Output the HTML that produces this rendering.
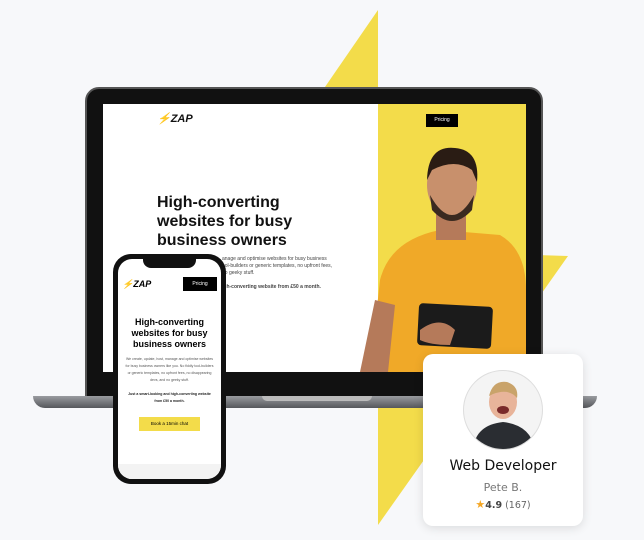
<!DOCTYPE html>
<html><head><meta charset="utf-8"><style>
*{margin:0;padding:0;box-sizing:border-box}
body{width:644px;height:540px;background:#f7f8fa;position:relative;overflow:hidden;font-family:"Liberation Sans",sans-serif}
.abs{position:absolute}
</style></head><body>
<svg class="abs" style="left:0;top:0" width="644" height="540">
<polygon points="378,10 378,100 316,100" fill="#f3dc4a"/>
<polygon points="378,250 568,256 378,525" fill="#f3dc4a"/>
</svg>
<!-- laptop -->
<div class="abs" style="left:85px;top:87px;width:458px;height:312px;background:#111;border-radius:14px 14px 0 0;border:2px solid #555"></div>
<div class="abs" style="left:103px;top:104px;width:423px;height:268px;background:#fff"></div>
<div class="abs" style="left:378px;top:104px;width:148px;height:268px;background:#f3dc4a"></div>
<div class="abs" style="left:33px;top:396px;width:564px;height:12px;background:linear-gradient(#9a9ca0,#55575b);border-radius:0 0 40px 40px"></div>
<div class="abs" style="left:262px;top:396px;width:110px;height:5px;background:#bbb;border-radius:0 0 6px 6px"></div>
<!-- screen content -->
<div class="abs" style="left:157px;top:112px;font-weight:bold;font-style:italic;font-size:11px;color:#111">⚡ZAP</div>
<div class="abs" style="left:426px;top:114px;width:32px;height:13px;background:#000;color:#fff;font-size:5px;text-align:center;line-height:13px">Pricing</div>
<div class="abs" style="left:157px;top:193px;font-weight:bold;font-size:16px;line-height:19px;color:#111">High-converting<br>websites for busy<br>business owners</div>
<div class="abs" style="left:222px;top:256px;font-size:5px;line-height:7px;color:#444">anage and optimise websites for busy business<br>ool-builders or generic templates, no upfront fees,<br>no geeky stuff.<br><br><b>igh-converting website from £50 a month.</b></div>
<!-- person -->
<svg class="abs" style="left:360px;top:140px" width="166" height="232">
<path d="M10,232 L20,140 Q30,100 80,90 L140,95 Q166,110 166,150 L166,232Z" fill="#f0a928"/>
<rect x="76" y="60" width="30" height="40" fill="#b57a5a"/>
<ellipse cx="92" cy="45" rx="25" ry="32" fill="#c8906c"/>
<path d="M67,40 Q68,5 95,8 Q120,10 117,42 L112,30 Q95,18 72,30Z" fill="#2a1c14"/>
<path d="M70,55 Q92,95 114,55 L112,70 Q92,92 72,70Z" fill="#3a2a20"/>
<path d="M0,232 L15,160 L35,165 L28,232Z" fill="#b57a5a"/>
<rect x="58" y="165" width="74" height="42" rx="4" fill="#1b1b1b" transform="rotate(3 95 186)"/>
<path d="M60,190 Q80,175 95,190 L90,205 Q70,205 60,200Z" fill="#b57a5a"/>
</svg>
<!-- phone -->
<div class="abs" style="left:113px;top:254px;width:113px;height:230px;background:#111;border-radius:18px"></div>
<div class="abs" style="left:118px;top:259px;width:103px;height:220px;background:#fff;border-radius:14px;overflow:hidden">
 <div style="position:absolute;left:25px;top:0;width:53px;height:9px;background:#111;border-radius:0 0 8px 8px"></div>
 <div style="position:absolute;left:4px;top:20px;font-weight:bold;font-style:italic;font-size:9px">⚡ZAP</div>
 <div style="position:absolute;left:65px;top:18px;width:34px;height:14px;background:#000;color:#fff;font-size:5px;text-align:center;line-height:14px">Pricing</div>
 <div style="position:absolute;left:0;top:58px;width:103px;text-align:center;font-weight:bold;font-size:9px;line-height:11px">High-converting<br>websites for busy<br>business owners</div>
 <div style="position:absolute;left:6px;top:97px;width:91px;text-align:center;font-size:3.5px;line-height:7px;color:#555">We create, update, host, manage and optimise websites for busy business owners like you. No fiddly tool-builders or generic templates, no upfront fees, no disappearing devs, and no geeky stuff.<br><br><b style="color:#222">Just a smart-looking and high-converting website from £50 a month.</b></div>
 <div style="position:absolute;left:21px;top:158px;width:61px;height:14px;background:#f3dc4a;font-size:4.5px;text-align:center;line-height:14px">Book a 15min chat</div>
 <div style="position:absolute;left:0;top:205px;width:103px;height:20px;background:#f3f3f3"></div>
</div>
<!-- card -->
<div class="abs" style="left:423px;top:354px;width:160px;height:172px;background:#fff;border-radius:10px;box-shadow:0 2px 10px rgba(0,0,0,.12)"></div>
<svg class="abs" style="left:463px;top:370px" width="80" height="80">
<defs><clipPath id="c"><circle cx="40" cy="40" r="39"/></clipPath></defs>
<circle cx="40" cy="40" r="39.5" fill="#f4f4f4" stroke="#ddd"/>
<g clip-path="url(#c)">
<path d="M10,80 Q12,55 40,52 Q68,55 72,80Z" fill="#2a2d32"/>
<ellipse cx="40" cy="32" rx="14" ry="17" fill="#e8b49a"/>
<path d="M26,26 Q30,10 44,12 Q56,16 54,28 Q46,18 30,24Z" fill="#c9a36a"/>
<ellipse cx="40" cy="40" rx="6" ry="4" fill="#7a2a2a"/>
</g></svg>
<div class="abs" style="left:423px;top:458px;width:160px;text-align:center;font-family:'DejaVu Sans',sans-serif;font-size:14px;color:#111">Web Developer</div>
<div class="abs" style="left:423px;top:481px;width:160px;text-align:center;font-family:'DejaVu Sans',sans-serif;font-size:11px;color:#777">Pete B.</div>
<div class="abs" style="left:423px;top:498px;width:160px;text-align:center;font-family:'DejaVu Sans',sans-serif;font-size:9.5px;color:#666"><span style="color:#f5a623;font-size:11px">★</span><b style="color:#444">4.9</b> (167)</div>
</body></html>
